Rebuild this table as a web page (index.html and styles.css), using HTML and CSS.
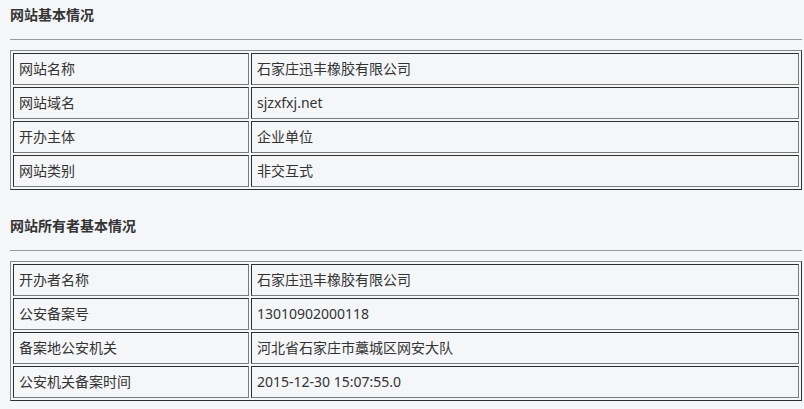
FILE: index.html
```html
<!DOCTYPE html>
<html lang="zh-CN">
<head>
<meta charset="utf-8">
<title>网站备案信息</title>
<link rel="stylesheet" href="styles.css">
</head>
<body>
<div class="page">
  <section class="block">
    <h3 class="title">网站基本情况</h3>
    <hr class="rule">
    <table class="info">
      <tr><td class="label">网站名称</td><td>石家庄迅丰橡胶有限公司</td></tr>
      <tr><td class="label">网站域名</td><td>sjzxfxj.net</td></tr>
      <tr><td class="label">开办主体</td><td>企业单位</td></tr>
      <tr><td class="label">网站类别</td><td>非交互式</td></tr>
    </table>
  </section>
  <section class="block second">
    <h3 class="title">网站所有者基本情况</h3>
    <hr class="rule">
    <table class="info">
      <tr><td class="label">开办者名称</td><td>石家庄迅丰橡胶有限公司</td></tr>
      <tr><td class="label">公安备案号</td><td>13010902000118</td></tr>
      <tr><td class="label">备案地公安机关</td><td>河北省石家庄市藁城区网安大队</td></tr>
      <tr><td class="label">公安机关备案时间</td><td>2015-12-30 15:07:55.0</td></tr>
    </table>
  </section>
</div>
</body>
</html>
```
FILE: styles.css
```css
html, body {
  margin: 0;
  padding: 0;
  background: #f5f6f8;
}
body {
  font-family: "Noto Sans", "Noto Sans CJK SC", sans-serif;
  font-size: 14px;
  color: #333;
}
.page {
  width: 792px;
  padding: 0 2px 0 10px;
}
.block {
  margin: 0;
}
.second {
  margin-top: 21px;
}
.title {
  margin: 0;
  padding-top: 5px;
  font-size: 14px;
  line-height: 20px;
  font-weight: bold;
  color: #333;
}
.rule {
  margin: 14px 0 0;
  height: 0;
  border: 0;
  border-top: 1px solid #999;
}
.info {
  margin-top: 10px;
  width: 792px;
  box-sizing: border-box;
  border-collapse: separate;
  border-spacing: 2px;
  border: 1px solid;
  border-color: #8a8a8a #2e2e2e #2e2e2e #8a8a8a;
  table-layout: fixed;
}
.info td {
  box-sizing: border-box;
  height: 32px;
  padding: 5px;
  line-height: 20px;
  border: 1px solid;
  border-color: #2e2e2e #7a7a7a #7a7a7a #2e2e2e;
  color: #333;
  white-space: nowrap;
}
.info td.label {
  width: 236px;
}
```
